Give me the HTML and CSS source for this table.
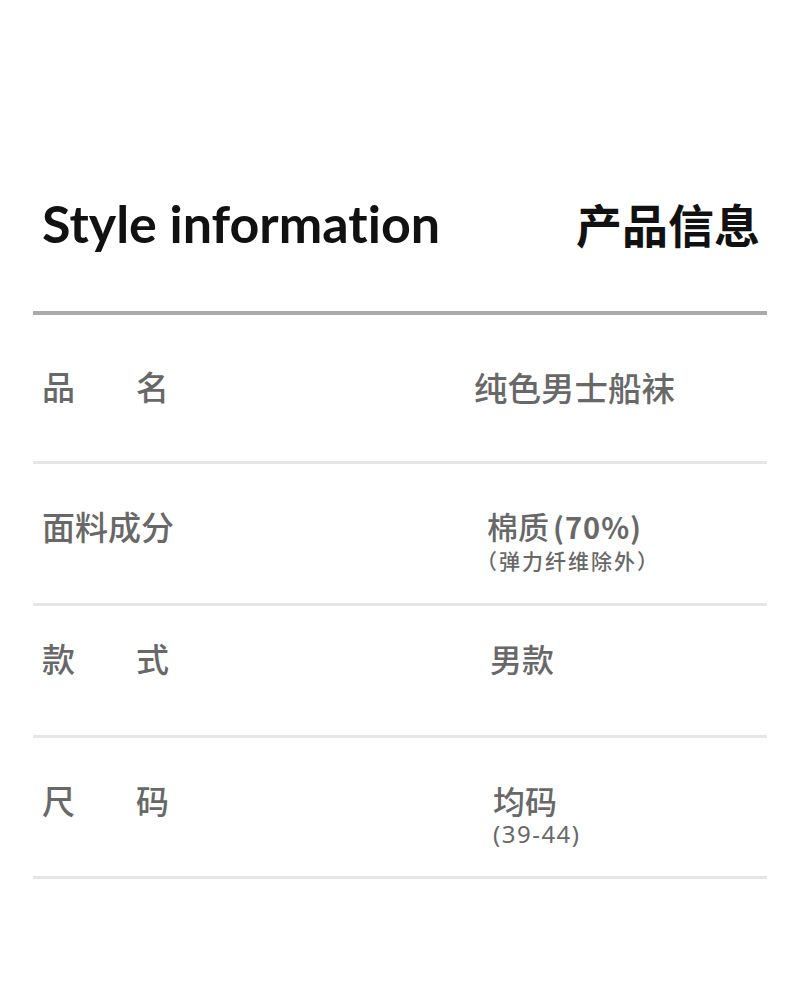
FILE: index.html
```html
<!DOCTYPE html>
<html lang="zh">
<head>
<meta charset="utf-8">
<link rel="stylesheet" href="styles.css">
</head>
<body>
<div class="sheet">
  <header class="head">
    <h1 class="title-en">Style information</h1>
    <h2 class="title-zh">产品信息</h2>
  </header>
  <div class="row row-1">
    <div class="label"><span class="lc">品</span><span class="lc">名</span></div>
    <div class="value v-1">纯色男士船袜</div>
  </div>
  <div class="row row-2">
    <div class="label">面料成分</div>
    <div class="value v-2">
      <div class="main">棉质<span class="pct">(70%)</span></div>
      <div class="sub">（弹力纤维除外）</div>
    </div>
  </div>
  <div class="row row-3">
    <div class="label"><span class="lc">款</span><span class="lc">式</span></div>
    <div class="value v-3">男款</div>
  </div>
  <div class="row row-4">
    <div class="label"><span class="lc">尺</span><span class="lc">码</span></div>
    <div class="value v-4">
      <div class="main">均码</div>
      <div class="sub num">(39-44)</div>
    </div>
  </div>
</div>
</body>
</html>
```
FILE: styles.css
```css
html, body {
  margin: 0;
  padding: 0;
  background: #ffffff;
}
body {
  font-family: "Noto Sans", "Noto Sans CJK SC", sans-serif;
}
.sheet {
  width: 734px;
  margin-left: 33px;
}
.head {
  display: flex;
  justify-content: space-between;
  align-items: baseline;
  padding: 197px 7px 0 9px;
  height: 315px;
  box-sizing: border-box;
  border-bottom: 4px solid #aaaaaa;
}
.title-en {
  margin: 0;
  font-family: "Lato", sans-serif;
  font-weight: 700;
  font-size: 52px;
  line-height: 1;
  font-variant-ligatures: none;
  color: #111;
}
.title-zh {
  margin: 0;
  font-family: "Noto Sans CJK SC", sans-serif;
  font-weight: 700;
  font-size: 46px;
  line-height: 1;
  color: #111;
}
.row {
  display: flex;
  border-bottom: 3px solid #e6e6e6;
  box-sizing: border-box;
  color: #686868;
  font-family: "Noto Sans CJK SC", sans-serif;
  font-weight: 500;
}
.row-1 { height: 149px; padding-top: 55px; }
.row-2 { height: 142px; padding-top: 46px; }
.row-3 { height: 132px; padding-top: 36px; }
.row-4 { height: 141px; padding-top: 46px; }
.label {
  width: 432px;
  padding-left: 9px;
  font-size: 33px;
  line-height: 1;
  display: flex;
}
.lc {
  width: 94px;
}
.value {
  font-size: 32px;
  line-height: 1;
}
.v-1 { font-size: 33.5px; }
.v-2 { margin-left: 13px; font-size: 31px; }
.v-3 { margin-left: 16px; }
.v-4 { margin-left: 19px; }
.pct {
  font-weight: 700;
  font-size: 29px;
  letter-spacing: 1px;
  margin-left: 4px;
}
.sub {
  font-size: 21px;
  line-height: 1;
  letter-spacing: 2px;
  margin-top: 9px;
  margin-left: -11px;
}
.sub.num {
  font-family: "Noto Sans", sans-serif;
  font-weight: 400;
  font-size: 24px;
  letter-spacing: 1.5px;
  margin-left: 0;
  margin-top: 6px;
}
```
